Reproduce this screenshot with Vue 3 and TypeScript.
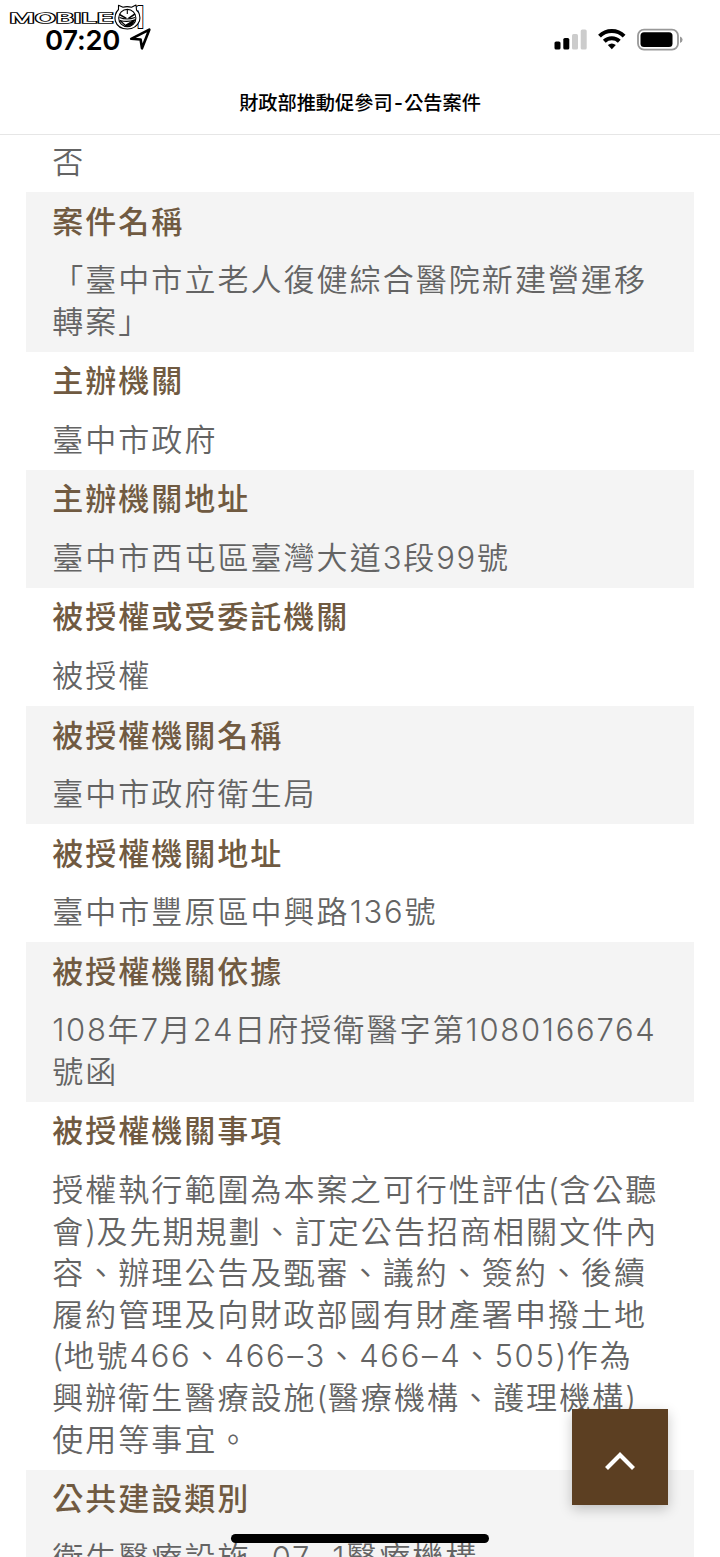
<script setup lang="ts">
interface Item {
  label: string
  lines: string[]
}

interface Run {
  text: string
  kind: string
}

const items: Item[] = [
  { label: '', lines: ['否'] },
  { label: '案件名稱', lines: ['「臺中市立老人復健綜合醫院新建營運移', '轉案」'] },
  { label: '主辦機關', lines: ['臺中市政府'] },
  { label: '主辦機關地址', lines: ['臺中市西屯區臺灣大道3段99號'] },
  { label: '被授權或受委託機關', lines: ['被授權'] },
  { label: '被授權機關名稱', lines: ['臺中市政府衛生局'] },
  { label: '被授權機關地址', lines: ['臺中市豐原區中興路136號'] },
  { label: '被授權機關依據', lines: ['108年7月24日府授衛醫字第1080166764', '號函'] },
  {
    label: '被授權機關事項',
    lines: [
      '授權執行範圍為本案之可行性評估(含公聽',
      '會)及先期規劃、訂定公告招商相關文件內',
      '容、辦理公告及甄審、議約、簽約、後續',
      '履約管理及向財政部國有財產署申撥土地',
      '(地號466、466–3、466–4、505)作為',
      '興辦衛生醫療設施(醫療機構、護理機構)',
      '使用等事宜。',
    ],
  },
  { label: '公共建設類別', lines: ['衛生醫療設施–07–1醫療機構'] },
]

function kindOf(text: string): string {
  if (/^[0-9]/.test(text)) return 'latin'
  if (/^[()]/.test(text)) return 'latin paren'
  if (text.startsWith('–')) return 'latin rule'
  return ''
}

function runs(line: string): Run[] {
  return line
    .split(/([0-9]+|[()]|–)/)
    .filter((t) => t.length > 0)
    .map((text) => ({ text, kind: kindOf(text) }))
}
</script>

<template>
  <div class="screen" lang="zh-TW">
    <header class="top">
      <div class="status">
        <div class="clock">
          <span class="time">07:20</span>
          <svg class="loc" width="24" height="24" viewBox="0 0 24 24">
            <path d="M2.200 11.800 20.300 2.700 13 21.300 11.600 12.500Z" fill="none" stroke="#000" stroke-width="2.600" stroke-linejoin="round" />
          </svg>
        </div>
        <svg class="indicators" width="130" height="24" viewBox="0 0 130 24">
          <rect x="0.500" y="13.500" width="6" height="8" rx="1.600" />
          <rect x="9.300" y="10" width="6" height="11.500" rx="1.600" />
          <rect x="18" y="6" width="6" height="15.500" rx="1.600" fill="#ccc" />
          <rect x="26.700" y="1.500" width="6" height="20" rx="1.600" fill="#ccc" />
          <g fill="none" stroke="#000" stroke-width="4">
            <path d="M45.500 8.100A17.500 17.500 0 0 1 70.100 8.100" />
            <path d="M50.300 13.200A10.700 10.700 0 0 1 65.300 13.200" />
          </g>
          <path d="M53.800 17Q57.800 14 61.800 17L57.800 21.300Z" />
          <rect x="84" y="1.600" width="40" height="20" rx="6" fill="none" stroke="#999" stroke-width="1.800" />
          <rect x="86.500" y="4.200" width="32" height="14.800" rx="3.500" />
          <path d="M126 8.500q2.600 1 2.600 3.200t-2.600 3.200z" fill="#999" />
        </svg>
      </div>
      <div class="title">財政部推動促參司<span class="dash">-</span>公告案件</div>
    </header>

    <main class="list">
      <section v-for="(item, i) in items" :key="i" class="item" :class="{ shaded: i % 2 === 1, bare: !item.label }">
        <h2 v-if="item.label" class="label">{{ item.label }}</h2>
        <p v-for="(line, j) in item.lines" :key="j" class="line">
          <span v-for="(r, k) in runs(line)" :key="k" :class="r.kind">{{ r.text }}</span>
        </p>
      </section>
    </main>

    <button class="to-top" type="button" aria-label="Top">
      <svg width="32" height="22" viewBox="0 0 32 22">
        <path d="M2.500 18.500 16 5 29.500 18.500" fill="none" stroke="#fff" stroke-width="4.200" />
      </svg>
    </button>
    <div class="home"></div>

    <svg class="mark" width="150" height="34" viewBox="0 0 150 34">
      <text x="9.500" y="22.800" textLength="104" lengthAdjust="spacingAndGlyphs" class="mark-text">MOBILE</text>
      <text x="133" y="28" textLength="11" lengthAdjust="spacingAndGlyphs" class="mark-one">1</text>
      <g fill="#fff" stroke="#000" stroke-width="1.100" stroke-linejoin="round">
        <path d="M118.500 9.500 118.500 5.200 123 7.300Q127 6 131.500 7.300L136 5 136.500 10Q141 14 139.500 21 136 29 127.500 29 118 29 115.300 21 114 14 118.500 9.500Z" />
        <circle cx="127.300" cy="18" r="8.600" />
        <path d="M119.500 14.500 126.300 18.300M135 14 128.500 18.300" stroke-width="1.500" />
        <path d="M119.500 17.500Q127 20.500 135 17.500M127.300 9.500V14" fill="none" />
        <path d="M120 20.500Q128 22.500 134.500 20 131 26 125.500 25.500Z" />
        <path d="M126 25 134.500 20 131.500 25.200Z" fill="#000" />
      </g>
    </svg>
  </div>
</template>

<style>
html,
body {
  background: #fff;
}
</style>

<style scoped>
.screen {
  position: relative;
  width: 720px;
  height: 1557px;
  overflow: hidden;
  background: #fff;
  font-family: 'Noto Sans CJK TC', sans-serif;
}
.top {
  box-sizing: border-box;
  height: 135px;
  border-bottom: 1.500px solid #e6e6e6;
}
.status {
  display: flex;
  justify-content: space-between;
  height: 70px;
  padding: 0 36px 0 45px;
}
.clock {
  display: flex;
  padding-top: 22px;
}
.time {
  width: 84px;
  font: 600 27.500px/36px Inter, sans-serif;
  letter-spacing: -0.300px;
}
.loc {
  margin-top: 5px;
}
.indicators {
  margin-top: 28px;
}
.title {
  padding-top: 16.500px;
  text-align: center;
  font-size: 19.200px;
  font-weight: 500;
  line-height: 30px;
  color: #000;
}
.dash {
  display: inline-block;
  width: 11.500px;
  font-family: Inter, sans-serif;
  font-weight: 600;
}
.list {
  padding: 0 26px;
}
.item {
  box-sizing: border-box;
  padding: 6.600px 0 11.400px 26.200px;
}
.item.bare {
  height: 57px;
  padding-top: 3.500px;
}
.shaded {
  background: #f4f4f4;
}
.label {
  margin: 0 0 16.800px;
  font-size: 31px;
  font-weight: 500;
  line-height: 41.650px;
  letter-spacing: 2px;
  color: #705a41;
}
.line {
  margin: 0;
  height: 41.650px;
  font-size: 31px;
  font-weight: 350;
  line-height: 41.650px;
  letter-spacing: 2.050px;
  color: #646464;
  white-space: nowrap;
}
.latin {
  font-family: Inter, sans-serif;
  font-weight: 300;
  letter-spacing: 1.700px;
}
.paren {
  letter-spacing: 0.400px;
}
.rule {
  padding: 0 1px;
}
.item:last-child .rule {
  padding-left: 3px;
}
.to-top {
  position: absolute;
  left: 572px;
  top: 1409px;
  display: flex;
  align-items: center;
  justify-content: center;
  width: 96px;
  height: 96px;
  padding: 8px 0 0;
  border: 0;
  background: #5c3f22;
  box-shadow: 0 4px 12px rgba(0, 0, 0, 0.220);
}
.home {
  position: absolute;
  left: 231px;
  top: 1534px;
  width: 258px;
  height: 9px;
  border-radius: 5px;
  background: #000;
}
.mark {
  position: absolute;
  left: 0;
  top: 0;
}
.mark-text {
  font: 500 12.500px Inter, sans-serif;
  fill: #fff;
  stroke: #000;
  stroke-width: 1.500px;
  paint-order: stroke;
}
.mark-one {
  font: 700 30px Inter, sans-serif;
  fill: #fff;
  stroke: #000;
  stroke-width: 2px;
  paint-order: stroke;
}
</style>
